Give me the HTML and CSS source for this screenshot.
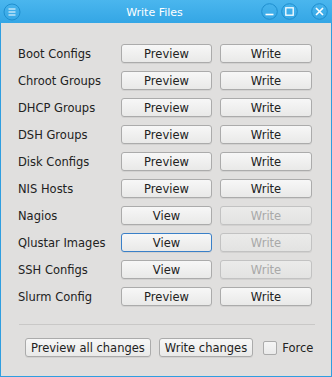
FILE: index.html
```html
<!DOCTYPE html>
<html lang="en">
<head>
    <meta charset="UTF-8">
    <title>Write Files</title>
    <link rel="stylesheet" href="styles.css">
</head>
<body>
    <div class="window">
        <div class="titlebar">
            <span class="tb-btn tb-menu">
                <svg width="18" height="18" viewBox="0 0 18 18"><circle cx="9" cy="9" r="8" fill="none" stroke="#1f8fcf" stroke-width="1"/><path d="M5.5 6h7M5.5 9h7M5.5 12h7" stroke="#fff" stroke-width="1.2"/></svg>
            </span>
            <div class="title">Write Files</div>
            <span class="tb-btn">
                <svg width="17" height="17" viewBox="0 0 17 17"><circle cx="8.5" cy="8.5" r="7.8" fill="none" stroke="#1f8fcf" stroke-width="1"/><path d="M4.5 11.5h8" stroke="#fff" stroke-width="1.6"/></svg>
            </span>
            <span class="tb-btn">
                <svg width="17" height="17" viewBox="0 0 17 17"><circle cx="8.5" cy="8.5" r="7.8" fill="none" stroke="#1f8fcf" stroke-width="1"/><rect x="4.8" y="4.8" width="7.4" height="7.4" fill="none" stroke="#fff" stroke-width="1.3"/></svg>
            </span>
            <span class="tb-btn tb-close">
                <svg width="17" height="17" viewBox="0 0 17 17"><circle cx="8.5" cy="8.5" r="7.8" fill="none" stroke="#1f8fcf" stroke-width="1"/><path d="M5 5l7 7M12 5l-7 7" stroke="#fff" stroke-width="1.6"/></svg>
            </span>
        </div>

        <div class="content">
            <div class="file-grid">
                <div class="label">Boot Configs</div>
                <button class="btn">Preview</button>
                <button class="btn">Write</button>

                <div class="label">Chroot Groups</div>
                <button class="btn">Preview</button>
                <button class="btn">Write</button>

                <div class="label">DHCP Groups</div>
                <button class="btn">Preview</button>
                <button class="btn">Write</button>

                <div class="label">DSH Groups</div>
                <button class="btn">Preview</button>
                <button class="btn">Write</button>

                <div class="label">Disk Configs</div>
                <button class="btn">Preview</button>
                <button class="btn">Write</button>

                <div class="label">NIS Hosts</div>
                <button class="btn">Preview</button>
                <button class="btn">Write</button>

                <div class="label">Nagios</div>
                <button class="btn">View</button>
                <button class="btn" disabled>Write</button>

                <div class="label">Qlustar Images</div>
                <button class="btn focused">View</button>
                <button class="btn" disabled>Write</button>

                <div class="label">SSH Configs</div>
                <button class="btn">View</button>
                <button class="btn" disabled>Write</button>

                <div class="label">Slurm Config</div>
                <button class="btn">Preview</button>
                <button class="btn">Write</button>
            </div>

            <div class="separator"></div>

            <div class="actions">
                <button class="btn btn-auto">Preview all changes</button>
                <button class="btn btn-auto">Write changes</button>
                <label class="check">
                    <span class="box"></span> Force
                </label>
            </div>
        </div>
    </div>
</body>
</html>
```

FILE: styles.css
```css
body {
    margin: 0;
    background-color: #e0dfde;
    font-family: "DejaVu Sans", sans-serif;
    font-size: 11.5px;
    color: #222;
}
.window {
    width: 332px;
    height: 377px;
    box-sizing: border-box;
    border: 1px solid #2f9ee0;
    border-top: none;
    background-color: #e0dfde;
    display: flex;
    flex-direction: column;
}
.titlebar {
    height: 23px;
    margin: 0 -1px;
    background: linear-gradient(to bottom, #4ab6ee, #34a6e5);
    display: flex;
    align-items: center;
    padding: 0 4px 0 3px;
    color: #fff;
    font-size: 11px;
}
.title {
    flex: 1;
    text-align: center;
    padding-left: 30px;
    padding-top: 1px;
}
.tb-btn {
    display: flex;
    margin-left: 3px;
}
.tb-menu {
    margin-left: 0;
}
.tb-close {
    margin-left: 13px;
}
.content {
    flex: 1;
    padding: 21px 16px 0 17px;
}
.file-grid {
    display: grid;
    grid-template-columns: 95px 91px 92px;
    column-gap: 8px;
    row-gap: 8px;
    align-items: center;
}
.label {
    white-space: nowrap;
}
.btn {
    height: 19px;
    padding: 0 6px;
    font-family: "DejaVu Sans", sans-serif;
    font-size: 11.5px;
    color: #222;
    white-space: nowrap;
    background: linear-gradient(to bottom, #f7f7f7, #e9e9e8);
    border: 1px solid #ababab;
    border-radius: 3px;
    box-shadow: 0 1px 0 rgba(0, 0, 0, 0.06);
}
.btn:disabled {
    color: #a9a9a9;
    border-color: #c2c2c2;
    background: linear-gradient(to bottom, #ebebea, #e3e3e2);
}
.btn.focused {
    border-color: #3a80c8;
}
.separator {
    height: 1px;
    background-color: #c9c8c7;
    margin: 18px 0 13px 1px;
}
.actions {
    display: flex;
    align-items: center;
    padding-left: 7px;
}
.btn-auto {
    flex-shrink: 0;
    padding: 0 5px;
    margin-right: 8px;
}
.check {
    display: flex;
    align-items: center;
    gap: 5px;
    margin-left: 2px;
    white-space: nowrap;
}
.box {
    width: 12px;
    height: 12px;
    border: 1px solid #ababab;
    border-radius: 2px;
    background: linear-gradient(to bottom, #f5f5f5, #eaeaea);
}
```
